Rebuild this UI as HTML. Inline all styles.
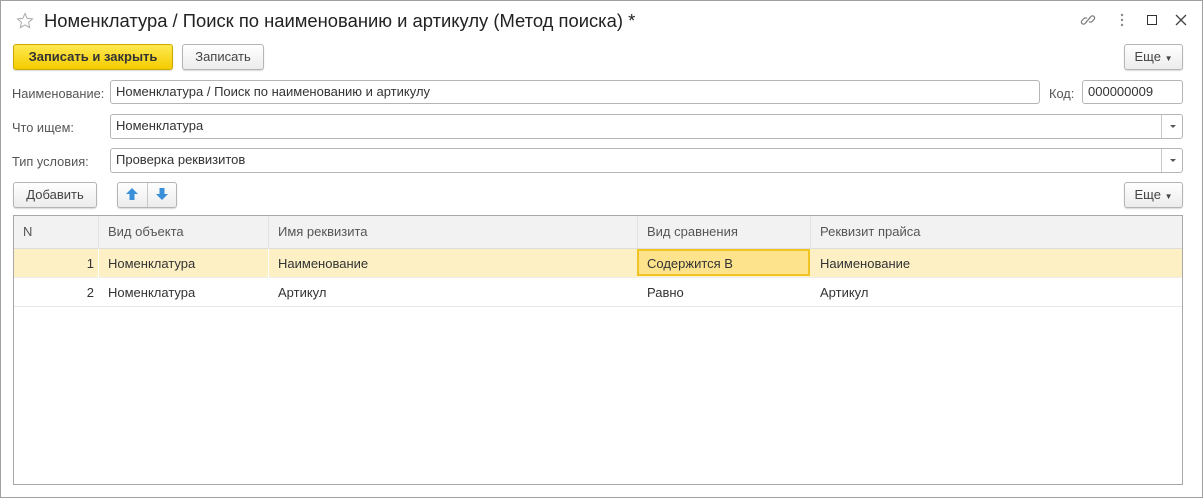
<!DOCTYPE html>
<html><head><meta charset="utf-8"><style>
*{box-sizing:border-box;margin:0;padding:0}
body{width:1203px;height:498px;background:#fff;font-family:"Liberation Sans",Arial,sans-serif;font-size:13px;color:#333;position:relative;overflow:hidden}
.win{position:absolute;left:0;top:0;width:1203px;height:498px;border:1px solid #a0a0a0}
.a{position:absolute}
.btn{position:absolute;border:1px solid #b5b5b5;border-radius:3px;background:linear-gradient(#fff,#ececec);box-shadow:0 1px 1px rgba(0,0,0,.15);text-align:center;color:#444;font-size:13px}
.inp{position:absolute;border:1px solid #b5b5b5;border-radius:3px;background:#fff;padding-left:5px;color:#333;line-height:22px}
.lbl{position:absolute;color:#555;font-size:12.8px}
.dd{position:absolute;right:0;top:0;width:21px;height:100%;border-left:1px solid #c8c8c8}
.dd:after{content:"";position:absolute;left:8px;top:10px;border:3px solid transparent;border-top:3px solid #555}
.cell{position:absolute;line-height:28px;padding-left:9px;white-space:nowrap}
</style></head><body>
<div class="win"></div>
<svg class="a" style="left:16px;top:12px" width="18" height="18" viewBox="0 0 18 18"><path d="M9 1.5l2.2 4.9 5.3.5-4 3.5 1.2 5.2L9 12.9l-4.7 2.7 1.2-5.2-4-3.5 5.3-.5z" fill="none" stroke="#aaa" stroke-width="1"/></svg>
<div class="a" style="left:44px;top:9px;font-size:18.4px;color:#222;line-height:24px">Номенклатура / Поиск по наименованию и артикулу (Метод поиска) *</div>
<svg class="a" style="left:1080px;top:12px" width="16" height="16" viewBox="0 0 16 16"><g fill="none" stroke="#777" stroke-width="1.2"><path d="M7 9.5l-2 2a2 2 0 01-3-3l2-2a2 2 0 013 0"/><path d="M9 6.5l2-2a2 2 0 013 3l-2 2a2 2 0 01-3 0"/><path d="M6 10l4-4"/></g></svg>
<svg class="a" style="left:1120px;top:13px" width="4" height="14"><circle cx="2" cy="2" r="1.2" fill="#888"/><circle cx="2" cy="7" r="1.2" fill="#888"/><circle cx="2" cy="12" r="1.2" fill="#888"/></svg>
<div class="a" style="left:1147px;top:15px;width:10px;height:10px;border:1.5px solid #333"></div>
<svg class="a" style="left:1175px;top:14px" width="12" height="12"><path d="M1 1l10 10M11 1L1 11" stroke="#444" stroke-width="1.3"/></svg>

<div class="btn" style="left:13px;top:44px;width:160px;height:26px;line-height:24px;background:linear-gradient(#ffe850,#f4cc00);border-color:#c9a800;color:#333;font-weight:bold">Записать и закрыть</div>
<div class="btn" style="left:182px;top:44px;width:82px;height:26px;line-height:24px">Записать</div>
<div class="btn" style="left:1124px;top:44px;width:59px;height:26px;line-height:24px">Еще <span style="font-size:8px">▼</span></div>

<div class="lbl" style="left:12px;top:86px">Наименование:</div>
<div class="inp" style="left:110px;top:80px;width:930px;height:24px">Номенклатура / Поиск по наименованию и артикулу</div>
<div class="lbl" style="left:1049px;top:86px">Код:</div>
<div class="inp" style="left:1082px;top:80px;width:101px;height:24px">000000009</div>

<div class="lbl" style="left:12px;top:120px">Что ищем:</div>
<div class="inp" style="left:110px;top:114px;width:1073px;height:25px">Номенклатура<div class="dd"></div></div>
<div class="lbl" style="left:12px;top:154px">Тип условия:</div>
<div class="inp" style="left:110px;top:148px;width:1073px;height:25px">Проверка реквизитов<div class="dd"></div></div>

<div class="btn" style="left:13px;top:182px;width:84px;height:26px;line-height:24px">Добавить</div>
<div class="btn" style="left:117px;top:182px;width:60px;height:26px"></div>
<div class="a" style="left:147px;top:183px;width:1px;height:24px;background:#c8c8c8"></div>
<svg class="a" style="left:125px;top:187px" width="14" height="14"><path d="M7 1l6 6H9.5v6h-5V7H1z" fill="#3a8fd8"/></svg>
<svg class="a" style="left:155px;top:187px" width="14" height="14"><path d="M7 13l6-6H9.5V1h-5v6H1z" fill="#3a8fd8"/></svg>
<div class="btn" style="left:1124px;top:182px;width:59px;height:26px;line-height:24px">Еще <span style="font-size:8px">▼</span></div>

<div class="a" style="left:13px;top:215px;width:1170px;height:270px;border:1px solid #a8a8a8;overflow:hidden">
 <div class="a" style="left:0;top:0;width:1170px;height:33px;background:#f2f2f2;border-bottom:1px solid #ddd"></div>
 <div class="a" style="left:0;top:33px;width:1170px;height:29px;background:#fdf0c4;border-bottom:1px solid #eee"></div>
 <div class="a" style="left:0;top:62px;width:1170px;height:29px;border-bottom:1px solid #e6e6e6"></div>
 <div class="a" style="left:84px;top:0;width:1px;height:33px;background:#e2e2e2"></div>
 <div class="a" style="left:254px;top:0;width:1px;height:33px;background:#e2e2e2"></div>
 <div class="a" style="left:623px;top:0;width:1px;height:33px;background:#e2e2e2"></div>
 <div class="a" style="left:796px;top:0;width:1px;height:33px;background:#e2e2e2"></div>
 <div class="a" style="left:84px;top:33px;width:1px;height:29px;background:#fff"></div>
 <div class="a" style="left:254px;top:33px;width:1px;height:29px;background:#fff"></div>
 <div class="a" style="left:623px;top:33px;width:173px;height:27px;background:#fde38c;border:2px solid #f2c325"></div>
 <div class="cell" style="left:0;top:2px;color:#555">N</div>
 <div class="cell" style="left:85px;top:2px;color:#555">Вид объекта</div>
 <div class="cell" style="left:255px;top:2px;color:#555">Имя реквизита</div>
 <div class="cell" style="left:624px;top:2px;color:#555">Вид сравнения</div>
 <div class="cell" style="left:797px;top:2px;color:#555">Реквизит прайса</div>
 <div class="cell" style="left:0;top:34px;width:80px;text-align:right">1</div>
 <div class="cell" style="left:85px;top:34px">Номенклатура</div>
 <div class="cell" style="left:255px;top:34px">Наименование</div>
 <div class="cell" style="left:624px;top:34px">Содержится В</div>
 <div class="cell" style="left:797px;top:34px">Наименование</div>
 <div class="cell" style="left:0;top:63px;width:80px;text-align:right">2</div>
 <div class="cell" style="left:85px;top:63px">Номенклатура</div>
 <div class="cell" style="left:255px;top:63px">Артикул</div>
 <div class="cell" style="left:624px;top:63px">Равно</div>
 <div class="cell" style="left:797px;top:63px">Артикул</div>
</div>
</body></html>
